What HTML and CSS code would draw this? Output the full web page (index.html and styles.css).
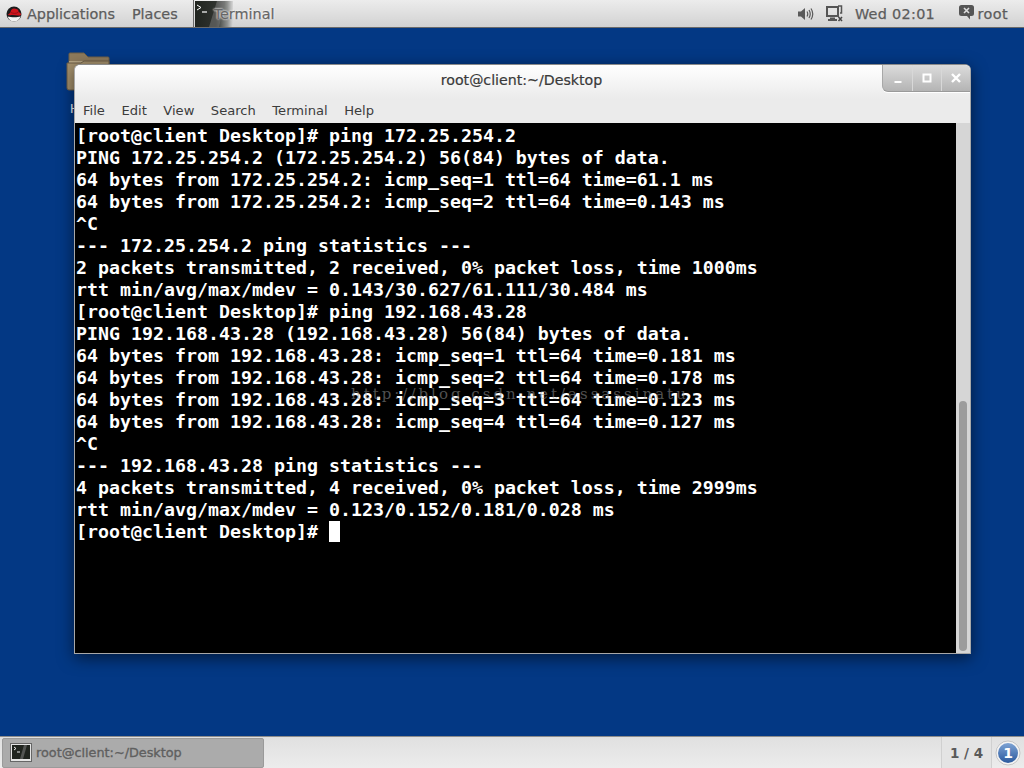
FILE: index.html
```html
<!DOCTYPE html>
<html lang="en">
<head>
<meta charset="utf-8">
<title>root@client:~/Desktop</title>
<link rel="stylesheet" href="styles.css">
</head>
<body>
<div class="screen">
  <header class="topbar">
    <svg class="logo" width="16" height="16" viewBox="0 0 16 16"><circle cx="8" cy="8" r="7.500" fill="#1c1c1c"/><path d="M1.500 10.500c3 .5 9 1.500 13.200-.3C13.500 13.500 11 15.500 8 15.500c-3 0-5.300-2-6.500-5Z" fill="#f2f2f2"/><path d="M2 8.500C3 7.500 4 7.500 4.500 6 5 4 6 2.500 8 2.500c1 0 2 .7 3 .7 1 0 1.500 1 1.500 2.300.5 1 2.500 1.500 2.500 3 0 1-1.500 1.300-3 1C9 9 6.500 8.700 4 9.300 3 9.500 2 9 2 8.500Z" fill="#d0141c"/><path d="M5 6.500c2 1 5 1.500 7.500-.5" fill="none" stroke="#8b0d12" stroke-width=".8"/></svg>
    <span class="topitem apps">Applications</span>
    <span class="topitem places">Places</span>
    <div class="taskbutton">
      <span class="taskthumb"><svg width="38" height="26" viewBox="0 0 38 26"><path d="M2 4l4 2.500-4 2.500" fill="none" stroke="#fff" stroke-width="1"/><path d="M7 11h5" stroke="#fff" stroke-width="1.200"/><path d="M14 26L22 0h8L24 26Z" fill="#777" opacity=".55"/></svg></span>
      <span class="tasklabel">Terminal</span>
    </div>
    <div class="status">
      <svg class="vol" width="16" height="14" viewBox="0 0 16 14"><path d="M0 4.500h3L7 1v12L3 9.500H0Z" fill="#5a5a5a"/><path d="M9 4.500q1.500 2.500 0 5M11 3q2.500 4 0 8M13 1.500q3.500 5.500 0 11" fill="none" stroke="#5a5a5a" stroke-width="1.200"/></svg>
      <svg class="net" width="17" height="17" viewBox="0 0 17 17"><path d="M1 2h11v9H1Z" fill="none" stroke="#555" stroke-width="2"/><path d="M4 12.500h5v1.500h2v2H2v-2h2Z" fill="#555"/><path d="M12 1h3.500v7H14" fill="none" stroke="#555" stroke-width="1.500"/><path d="M12.500 12l3.500 4M16 12l-3.500 4" stroke="#444" stroke-width="1.500"/></svg>
      <span class="clock">Wed 02:01</span>
      <svg class="chat" width="15" height="15" viewBox="0 0 15 15"><path d="M2.500 0h10A2.500 2.500 0 0 1 15 2.500v6A2.500 2.500 0 0 1 12.500 11H11v3.500L8 11H2.500A2.500 2.500 0 0 1 0 8.500v-6A2.500 2.500 0 0 1 2.500 0Z" fill="#555"/><path d="M5 3l5 5M10 3l-5 5" stroke="#ddd" stroke-width="1.600"/></svg>
      <span class="user">root</span>
    </div>
  </header>

  <main class="desktop">
    <svg class="folder" width="44" height="40" viewBox="0 0 44 40"><path d="M3 2q0-1 1-1h14l4 4h20q1 0 1 1v8H3Z" fill="#8d7a5c" stroke="#6e5f47"/><path d="M3 9h39v3H3Z" fill="#b7a684"/><path d="M1 11h14l3-2h25v29H3q-2 0-2-2Z" fill="#a5916d" stroke="#6e5f47"/></svg>
    <span class="foldername">Home</span>
    <section class="window">
      <div class="titlebar">
        <span class="wintitle">root@client:~/Desktop</span>
        <div class="wincontrols">
          <span class="winbtn"><svg width="10" height="10" viewBox="0 0 10 10"><path d="M1.500 8h7v2h-7Z" fill="#fff"/></svg></span>
          <span class="winbtn"><svg width="10" height="10" viewBox="0 0 10 10"><path d="M1.500 1.500h7v7h-7Z" fill="none" stroke="#fff" stroke-width="2"/></svg></span>
          <span class="winbtn"><svg width="10" height="10" viewBox="0 0 10 10"><path d="M1 1l8 8M9 1l-8 8" stroke="#fff" stroke-width="2.400"/></svg></span>
        </div>
      </div>
      <nav class="menubar">
        <span>File</span><span>Edit</span><span>View</span><span>Search</span><span>Terminal</span><span>Help</span>
      </nav>
      <div class="termwrap">
        <div class="terminal">
<pre class="output">[root@client Desktop]# ping 172.25.254.2
PING 172.25.254.2 (172.25.254.2) 56(84) bytes of data.
64 bytes from 172.25.254.2: icmp_seq=1 ttl=64 time=61.1 ms
64 bytes from 172.25.254.2: icmp_seq=2 ttl=64 time=0.143 ms
^C
--- 172.25.254.2 ping statistics ---
2 packets transmitted, 2 received, 0% packet loss, time 1000ms
rtt min/avg/max/mdev = 0.143/30.627/61.111/30.484 ms
[root@client Desktop]# ping 192.168.43.28
PING 192.168.43.28 (192.168.43.28) 56(84) bytes of data.
64 bytes from 192.168.43.28: icmp_seq=1 ttl=64 time=0.181 ms
64 bytes from 192.168.43.28: icmp_seq=2 ttl=64 time=0.178 ms
64 bytes from 192.168.43.28: icmp_seq=3 ttl=64 time=0.123 ms
64 bytes from 192.168.43.28: icmp_seq=4 ttl=64 time=0.127 ms
^C
--- 192.168.43.28 ping statistics ---
4 packets transmitted, 4 received, 0% packet loss, time 2999ms
rtt min/avg/max/mdev = 0.123/0.152/0.181/0.028 ms
[root@client Desktop]# <span class="cursor"> </span></pre>
          <span class="watermark">http://blog.csdn.net/assassinatu</span>
        </div>
        <div class="scrolltrack"><div class="scrollthumb"></div></div>
      </div>
    </section>
  </main>

  <footer class="bottombar">
    <div class="winlist">
      <span class="winlisticon"><svg width="22" height="19" viewBox="0 0 22 19"><rect x=".5" y=".5" width="21" height="18" fill="#e4e4e4" stroke="#666"/><rect x="2" y="2" width="18" height="14" fill="#20241f"/><path d="M4 4l2 1.500-2 1.500M7 9h3" fill="none" stroke="#fff" stroke-width=".9"/><path d="M10 16l4-14h3l-4 14Z" fill="#777" opacity=".6"/></svg></span>
      <span class="winlistlabel">root@client:~/Desktop</span>
    </div>
    <div class="pager">1 / 4</div>
    <svg class="badge" width="26" height="26" viewBox="0 0 26 26"><defs><linearGradient id="bg" x1="0" y1="0" x2="0" y2="1"><stop offset="0" stop-color="#7ea3d4"/><stop offset="1" stop-color="#2b5a9e"/></linearGradient></defs><circle cx="13" cy="13" r="12" fill="#f4f4f4" stroke="#aaa" stroke-width=".6"/><circle cx="13" cy="13" r="10" fill="url(#bg)"/><text x="13" y="18" text-anchor="middle" class="badgetext">1</text></svg>
  </footer>
</div>
</body>
</html>
```
FILE: styles.css
```css
* { box-sizing: border-box; }
html, body { margin: 0; padding: 0; }
body { font-family: "DejaVu Sans", sans-serif; overflow: hidden; }

.screen {
  width: 1024px;
  height: 768px;
  display: flex;
  flex-direction: column;
  background: #033884;
}

.topbar {
  height: 28px;
  flex: none;
  display: flex;
  align-items: center;
  background: linear-gradient(#ececec, #d2d2d2);
  border-bottom: 1px solid #6a6a6a;
  color: #5c5c5c;
  font-size: 14.400px;
  -webkit-text-stroke: .25px #5c5c5c;
  padding-left: 6px;
}
.logo { flex: none; margin-right: 5px; }
.topitem { white-space: nowrap; }
.apps { margin-right: 17px; }
.places { margin-right: 15px; }
.taskbutton {
  display: flex;
  align-items: center;
  height: 27px;
  border-left: 1px solid #6a6a6a;
  padding-left: 1px;
}
.taskthumb {
  display: block;
  width: 38px;
  height: 26px;
  background: linear-gradient(90deg, #20241f 0%, #30332f 55%, #8f918f 85%, #d8d8d8 100%);
}
.tasklabel {
  margin-left: -19px;
  position: relative;
  color: #666;
  -webkit-text-stroke: .25px #666;
  text-shadow: 0 0 2px #fff, 0 0 2px #fff;
}
.status { margin-left: auto; display: flex; align-items: center; padding-right: 16px; }
.vol { margin-right: 12px; }
.net { margin-right: 12px; }
.clock { margin-right: 24px; letter-spacing: .3px; }
.chat { margin-right: 3.500px; margin-top: -3px; }
.user { letter-spacing: .4px; }

.desktop { flex: 1; position: relative; }
.folder { position: absolute; left: 66px; top: 24px; }
.foldername {
  position: absolute;
  left: 70px;
  top: 74px;
  font-size: 12px;
  color: #fff;
}

.window {
  position: absolute;
  left: 74px;
  top: 36px;
  width: 897px;
  height: 590px;
  background: #ebebeb;
  border: 1px solid #a8a8a8;
  border-top-color: #8a8a8a;
  border-radius: 6px 6px 0 0;
  box-shadow: 0 4px 16px rgba(0, 0, 0, .55);
  display: flex;
  flex-direction: column;
}

.titlebar {
  height: 34px;
  flex: none;
  position: relative;
  display: flex;
  justify-content: center;
  padding-top: 5px;
  background: linear-gradient(#ffffff, #ebebeb);
  border-radius: 5px 5px 0 0;
}
.wintitle {
  font-size: 14.200px;
  -webkit-text-stroke: .2px #3a3a3a;
  color: #3a3a3a;
  line-height: 20px;
  margin-left: -2px;
}
.wincontrols {
  position: absolute;
  right: 0;
  top: 0;
  height: 27px;
  display: flex;
  background: linear-gradient(#dcdcdc, #b4b4b4);
  border-radius: 0 5px 0 6px;
  border-left: 1px solid #a8a8a8;
  border-bottom: 1px solid #9a9a9a;
  box-shadow: 0 1px 0 #fff;
}
.winbtn {
  width: 29px;
  display: flex;
  align-items: center;
  justify-content: center;
  border-left: 1px solid #d8d8d8;
}
.winbtn:first-child { border-left: 0; }

.menubar {
  height: 24px;
  flex: none;
  display: flex;
  gap: 16.500px;
  padding: 0 0 2px 8px;
  align-items: center;
  background: #ebebeb;
  font-size: 13.100px;
  color: #3c3c3c;
}
.menubar span { white-space: nowrap; }

.termwrap { flex: 1; display: flex; min-height: 0; }
.terminal {
  flex: 1;
  background: #000;
  position: relative;
  padding: 2px 0 0 1px;
  overflow: hidden;
}
.output {
  margin: 0;
  font-family: "DejaVu Sans Mono", monospace;
  font-weight: 700;
  font-size: 18.270px;
  line-height: 22px;
  color: #fff;
}
.cursor { background: #fff; }
.watermark {
  position: absolute;
  left: 276px;
  top: 262px;
  font-family: "DejaVu Serif", serif;
  font-size: 15px;
  letter-spacing: 3px;
  color: rgba(150, 150, 150, .55);
  white-space: nowrap;
}

.scrolltrack {
  width: 14px;
  flex: none;
  background: #d6d6d6;
  padding: 278px 3px 2px 3px;
}
.scrollthumb { height: 100%; background: #9c9c9c; border-radius: 4px; }

.bottombar {
  height: 32px;
  flex: none;
  display: flex;
  align-items: center;
  background: linear-gradient(#e0e0e0, #ececec);
  border-top: 1px solid #8c8c8c;
}
.winlist {
  width: 262px;
  height: 30px;
  margin-left: 2px;
  display: flex;
  align-items: center;
  background: #ababab;
  border: 1px solid #9a9a9a;
  border-radius: 2px;
  padding-left: 7px;
  color: #5f5f5f;
  font-size: 12.800px;
  -webkit-text-stroke: .35px #5f5f5f;
}
.winlisticon { display: flex; margin-right: 4px; }
.pager {
  margin-left: auto;
  width: 51px;
  height: 31px;
  display: flex;
  align-items: center;
  justify-content: center;
  font-weight: 700;
  font-size: 13.500px;
  color: #5a5a5a;
  border-left: 1px solid #d0d0d0;
  border-right: 1px solid #d0d0d0;
  background: #e4e4e4;
}
.badge { margin: 0 3px; flex: none; }
.badgetext { font: 700 14px "DejaVu Sans", sans-serif; fill: #fff; }
```
